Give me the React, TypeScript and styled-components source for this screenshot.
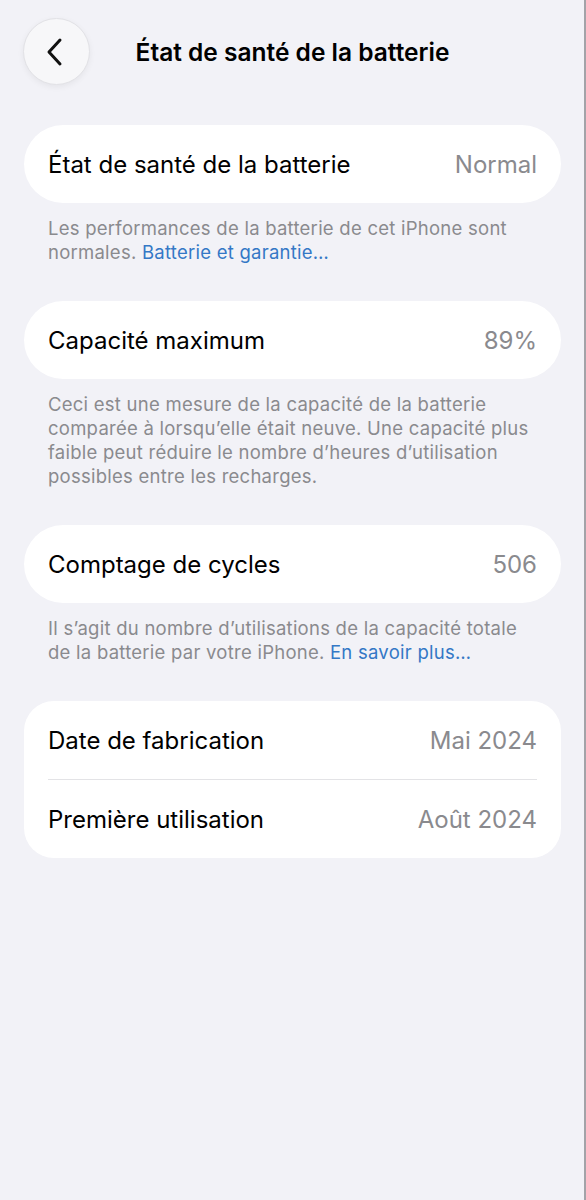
import React from "react";
import styled, { createGlobalStyle } from "styled-components";

const GlobalStyle = createGlobalStyle`
  html, body {
    margin: 0;
    padding: 0;
    background: #f2f2f7;
  }

  body {
    font-family: Inter, "Liberation Sans", sans-serif;
    -webkit-font-smoothing: antialiased;
  }
`

const Page = styled.div`
  box-sizing: border-box;
  width: 586px;
  min-height: 1200px;
  background: #f2f2f7;
  border-right: 2px solid #a3a3a8;
  padding: 18px 23px 0 24px;
`

const Header = styled.header`
  display: grid;
  grid-template-columns: 1fr auto 1fr;
  align-items: center;
  height: 67px;
  margin-bottom: 40px;
`

const BackButton = styled.button`
  box-sizing: border-box;
  width: 67px;
  height: 67px;
  border-radius: 50%;
  border: 1px solid #e2e2e6;
  background: #f7f7f9;
  box-shadow: 0 2px 6px rgba(0, 0, 0, 0.06);
  display: flex;
  align-items: center;
  justify-content: center;
  padding: 0 4px 0 0;
  margin-left: -1px;
  cursor: pointer;
`

const Title = styled.h1`
  margin: 0;
  font-size: 24.5px;
  font-weight: 600;
  color: #000;
  white-space: nowrap;
`

const Section = styled.section`
  margin-bottom: 37px;
`

const Card = styled.div`
  background: #fff;
  border-radius: ${(p: { $rounded?: number }) => p.$rounded ?? 39}px;
  padding: 0 24px;
`

const Row = styled.div`
  display: flex;
  align-items: center;
  justify-content: space-between;
  height: 78px;

  & + & {
    border-top: 1px solid #e3e3e6;
  }
`

const Label = styled.span`
  font-size: 24px;
  color: #000;
`

const Value = styled.span`
  font-size: 24px;
  color: #8a8a8e;
`

const Footer = styled.p`
  margin: 13px 0 0;
  padding: 0 25px 0 24px;
  font-size: 18.5px;
  line-height: 24px;
  color: #8a8a8e;
  letter-spacing: 0.25px;
`

const Link = styled.a`
  color: #3478c6;
  text-decoration: none;
`

const Chevron = () => (
  <svg width="20" height="30" viewBox="0 0 20 30" fill="none">
    <path d="M15 3 L4 15 L15 27" stroke="#111" strokeWidth="3" strokeLinecap="round" strokeLinejoin="round" />
  </svg>
)

const App = () => {
  return (
    <Page>
      <GlobalStyle />
      <Header>
        <div>
          <BackButton aria-label="Retour">
            <Chevron />
          </BackButton>
        </div>
        <Title>État de santé de la batterie</Title>
        <div />
      </Header>

      <Section>
        <Card>
          <Row>
            <Label>État de santé de la batterie</Label>
            <Value>Normal</Value>
          </Row>
        </Card>
        <Footer>
          Les performances de la batterie de cet iPhone sont normales. <Link>Batterie et garantie…</Link>
        </Footer>
      </Section>

      <Section>
        <Card>
          <Row>
            <Label>Capacité maximum</Label>
            <Value>89%</Value>
          </Row>
        </Card>
        <Footer>
          Ceci est une mesure de la capacité de la batterie comparée à lorsqu’elle était neuve. Une capacité plus faible peut réduire le nombre d’heures d’utilisation possibles entre les recharges.
        </Footer>
      </Section>

      <Section>
        <Card>
          <Row>
            <Label>Comptage de cycles</Label>
            <Value>506</Value>
          </Row>
        </Card>
        <Footer>
          Il s’agit du nombre d’utilisations de la capacité totale de la batterie par votre iPhone. <Link>En savoir plus…</Link>
        </Footer>
      </Section>

      <Section>
        <Card $rounded={30}>
          <Row>
            <Label>Date de fabrication</Label>
            <Value>Mai 2024</Value>
          </Row>
          <Row>
            <Label>Première utilisation</Label>
            <Value>Août 2024</Value>
          </Row>
        </Card>
      </Section>
    </Page>
  )
};

export default App;
